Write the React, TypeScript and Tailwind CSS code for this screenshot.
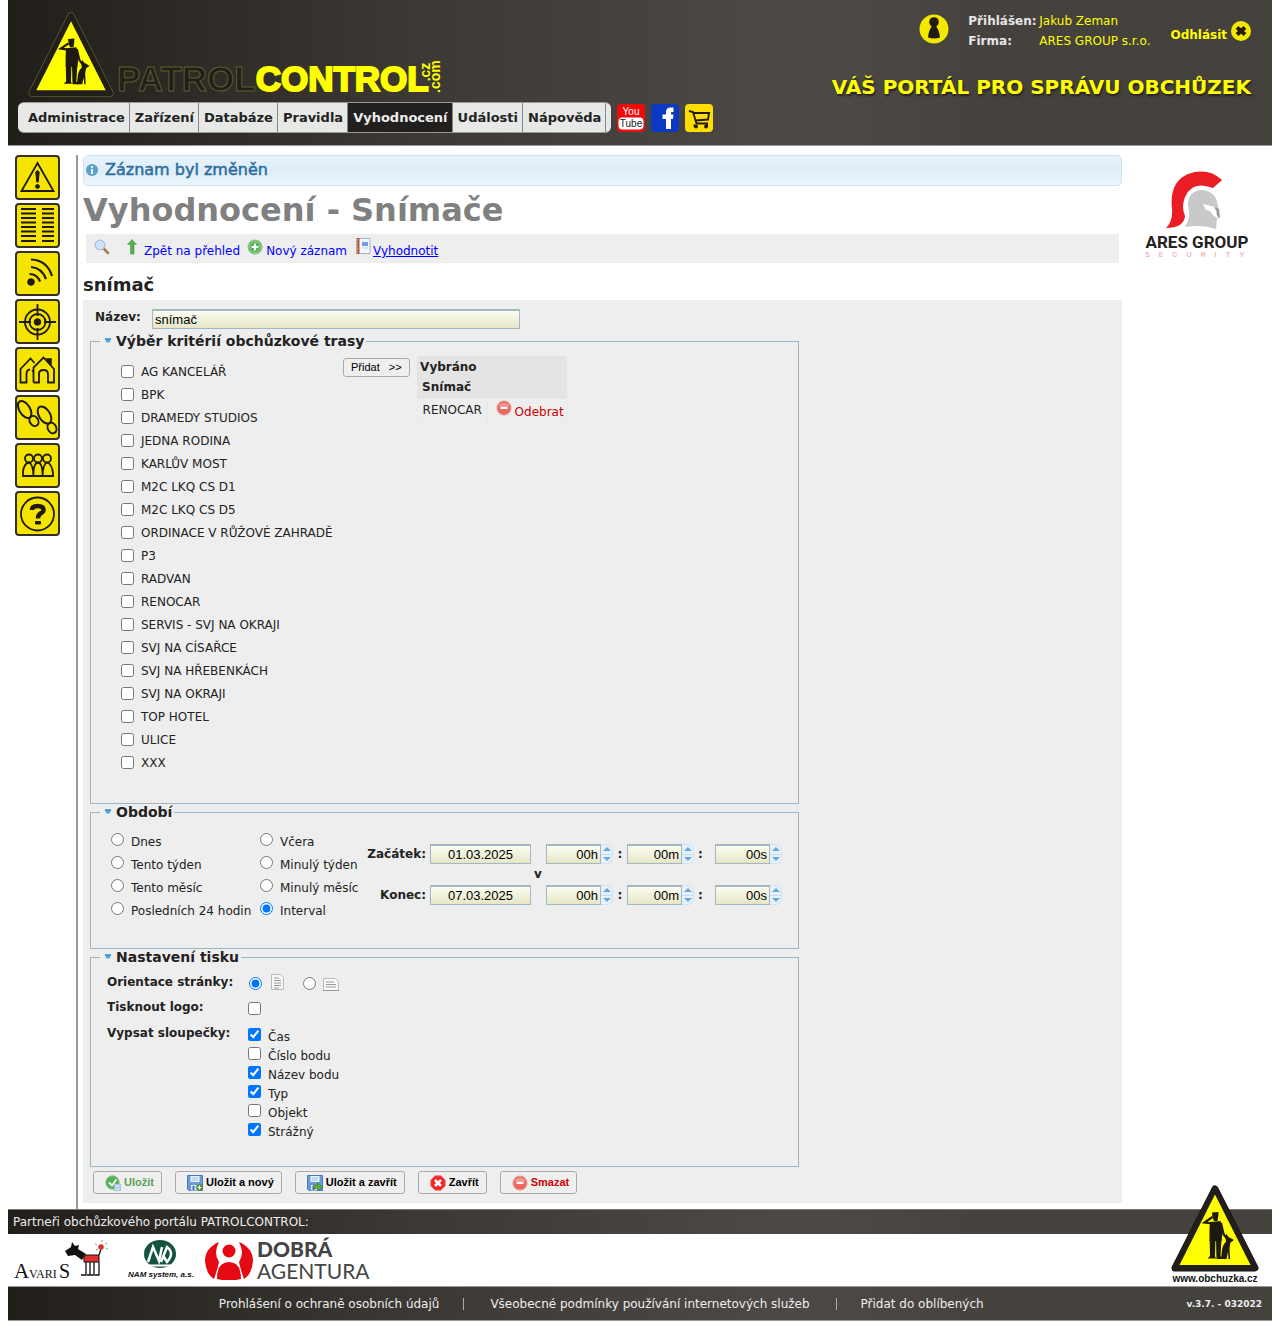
import React from 'react'

const bar =
  'bg-[linear-gradient(90deg,#221e1a_0%,#3c3834_32%,#4c4845_60%,#4c4845_66%,#45413d_78%,#45413d_100%)]'
const sans = "font-['Liberation_Sans',Arial,sans-serif]"
const field =
  'h-5 border border-[#a3b8c4] border-t-2 bg-linear-to-b from-[#fbfdf0] to-[#e6e6c6] text-[13px] text-black outline-none ' + sans
const btn =
  'flex items-center rounded-[3px] border border-[#aaa] bg-[#efefef] text-[11px] text-black ' + sans
const action = 'h-[23px] gap-[3px] pr-[7px] pl-[11px] font-bold ' + btn

function Guard() {
  return (
    <g fill="#1e1a12">
      <path d="M41 27.500L47.500 27 47.300 31 46.500 36H43L41.500 32z" />
      <path d="M39 37L49.500 36 52 44 50.500 56H38.500V44z" />
      <path d="M41 38.500L33.500 37.500 41.500 32M50 38L52.500 49 57 55" fill="none" stroke="#1e1a12" strokeWidth="2.200" />
      <path d="M38.700 54H44.500L44 71 45 73.500H36.500L39 71zM45 54H50.500L49.500 71 52 74H45.500z" />
      <path d="M50 74L51 65Q52 59 55 57L54.500 52 55.500 49 57.500 52 63 55 59.500 57.500 58.500 63 59 74H57.500L57 67 55.500 74z" />
    </g>
  )
}

function Sign({ edge, className }: { edge: string; className: string }) {
  return (
    <svg viewBox="0 0 88 88" className={className} aria-hidden="true">
      <path d="M44 4L84 83H4z" fill={edge} stroke={edge} strokeWidth="7" strokeLinejoin="round" />
      <path d="M44 4L84 83H4z" fill="#221f1a" stroke="#221f1a" strokeWidth="6" strokeLinejoin="round" />
      <path d="M44 9.500L79.500 80H8.500z" fill="#ff0" />
      <Guard />
    </svg>
  )
}

const sideIcons: { label: string; art: React.ReactNode }[] = [
  {
    label: 'Upozornění',
    art: (
      <>
        <path d="M22.500 8L38.500 36H6.500z" fill="none" strokeWidth="1.800" />
        <path d="M20.800 17q1.700-3 3.400 0L23.200 27h-1.400z" fill="#1e1a12" strokeWidth="1" />
        <circle cx="22.500" cy="31.500" r="1.900" fill="#1e1a12" strokeWidth="1" />
      </>
    ),
  },
  {
    label: 'Seznam',
    art: (
      <path
        d="M6 6H21M6 10.500H21M6 15H21M6 19.500H21M6 24H21M6 28.500H21M6 33H21M6 38H21M27 6H39M27 10.500H39M27 15H39M27 19.500H39M27 24H39M27 28.500H39M27 33H39M27 38H39"
        strokeWidth="2"
      />
    ),
  },
  {
    label: 'Snímače',
    art: (
      <>
        <circle cx="16" cy="31" r="3.300" fill="#1e1a12" strokeWidth="1" />
        <path d="M16 8.500Q32 9 37 25M16 16Q27 17 31 28M14.500 23Q22 23 25 30.500" fill="none" strokeWidth="2.200" />
      </>
    ),
  },
  {
    label: 'Body',
    art: (
      <>
        <circle cx="22.500" cy="23" r="12.500" fill="none" strokeWidth="1.800" />
        <circle cx="22.500" cy="23" r="8" fill="none" strokeWidth="1.800" />
        <circle cx="22.500" cy="23" r="3.300" fill="#1e1a12" />
        <path d="M22.500 5V17M22.500 29V41M4 23H16M29 23H41" fill="none" strokeWidth="1.800" />
      </>
    ),
  },
  {
    label: 'Objekty',
    art: (
      <>
        <path
          d="M19.500 16L15.500 11.500 5.500 22V35.500H11.500V27Q11.500 23 15 22.500M18.500 35.500V23.500L17 24.500M18.500 35.500H24V27Q24 23 28.500 23T33 27V35.500H39V22L28.500 10.500 18.500 20.500V24"
          fill="none"
          strokeWidth="1.800"
        />
        <path d="M32 12H36V18z" fill="#1e1a12" strokeWidth="1.500" />
      </>
    ),
  },
  {
    label: 'Trasy',
    art: (
      <g fill="none" strokeWidth="2">
        <ellipse cx="9.700" cy="14.500" rx="5.300" ry="9.500" transform="rotate(-32 9.700 14.500)" />
        <ellipse cx="19" cy="26" rx="4.200" ry="5.300" transform="rotate(-32 19 26)" />
        <ellipse cx="29.500" cy="20" rx="5.500" ry="9.500" transform="rotate(-32 29.500 20)" />
        <ellipse cx="37" cy="33" rx="4.200" ry="5.500" transform="rotate(-26 37 33)" />
      </g>
    ),
  },
  {
    label: 'Uživatelé',
    art: (
      <g fill="none" strokeWidth="1.800">
        <circle cx="14" cy="15.500" r="4" />
        <circle cx="23" cy="15.500" r="4" />
        <circle cx="32" cy="15.500" r="4" />
        <path d="M8 33V29Q9 20 14 19.500 18 21 18.500 33ZM18.500 33V29Q19 20 23 19.500 27 20 27.500 29V33ZM27.500 33Q28 21 32 19.500 37 21 38 30V33Z" />
      </g>
    ),
  },
  {
    label: 'Nápověda',
    art: (
      <>
        <circle cx="22.500" cy="23" r="16.500" fill="none" strokeWidth="1.800" />
        <path d="M17 19Q17 15 22.500 15 28.500 15 28.500 19 28.500 21 25.500 22.500 23 24 23 27.500" fill="none" strokeWidth="4.500" />
        <path d="M20.500 30.500h5v2.500h-5z" fill="#1e1a12" strokeWidth="1" />
      </>
    ),
  },
]

const menu = ['Administrace', 'Zařízení', 'Databáze', 'Pravidla', 'Vyhodnocení', 'Události', 'Nápověda']

const criteria = [
  'AG KANCELÁŘ', 'BPK', 'DRAMEDY STUDIOS', 'JEDNA RODINA', 'KARLŮV MOST', 'M2C LKQ CS D1',
  'M2C LKQ CS D5', 'ORDINACE V RŮŽOVÉ ZAHRADĚ', 'P3', 'RADVAN', 'RENOCAR', 'SERVIS - SVJ NA OKRAJI',
  'SVJ NA CÍSAŘCE', 'SVJ NA HŘEBENKÁCH', 'SVJ NA OKRAJI', 'TOP HOTEL', 'ULICE', 'XXX',
]

const periods = [
  ['Dnes', 'Včera'],
  ['Tento týden', 'Minulý týden'],
  ['Tento měsíc', 'Minulý měsíc'],
  ['Posledních 24 hodin', 'Interval'],
]

const columns: [string, boolean][] = [
  ['Čas', true],
  ['Číslo bodu', false],
  ['Název bodu', true],
  ['Typ', true],
  ['Objekt', false],
  ['Strážný', true],
]

function Minus() {
  return (
    <svg viewBox="0 0 16 16" className="size-4 shrink-0" aria-hidden="true">
      <circle cx="8" cy="8" r="7" fill="#ea6a62" stroke="#e9938d" />
      <path d="M2.500 6a6 5 0 0 1 11 0q-5 3-11 0z" fill="#f29a94" />
      <path d="M4.500 8H11.500" stroke="#fff" strokeWidth="2" />
    </svg>
  )
}

function Floppy({ badge }: { badge: 'plus' | 'arrow' }) {
  return (
    <svg viewBox="0 0 16 16" className="size-4 shrink-0" aria-hidden="true">
      <path d="M.5.500h15v15H2L.500 14z" fill="#6b9bdc" stroke="#4a78bb" />
      <path d="M3.500 1h9v6h-9z" fill="#e8f1fb" />
      <path d="M5 3h6M5 5h6" stroke="#9dbde4" />
      <path d="M4 10h8v5.500H4z" fill="#dbe6f3" />
      <path d="M5.500 11h2v4h-2z" fill="#3f6fb5" />
      {badge === 'plus' ? (
        <>
          <circle cx="12.500" cy="12.500" r="3.200" fill="#5d9645" stroke="#4a7d3b" strokeWidth=".6" />
          <path d="M12.500 10.500v4M10.500 12.500h4" stroke="#fff" strokeWidth="1.200" />
        </>
      ) : (
        <path d="M6.500 10h4V7.500l5.300 4.700-5.300 3.800v-2.500h-4z" fill="#5da645" stroke="#3c7d2b" strokeWidth=".7" />
      )}
    </svg>
  )
}

function Section({ title, className, children }: { title: string; className: string; children: React.ReactNode }) {
  return (
    <fieldset className="w-[709px] border border-[#9db4c3]">
      <legend className="ml-[9px] flex items-center pr-[2px] text-sm leading-4 font-bold">
        <svg viewBox="0 0 16 16" className="size-4" aria-hidden="true">
          <path d="M4.500 5.500h7L9.500 9.500h-3z" fill="#58a9e0" />
          <path d="M5 6h6" stroke="#2f7fbd" />
        </svg>
        {title}
      </legend>
      <div className={className}>{children}</div>
    </fieldset>
  )
}

function TimeBox({ value, label }: { value: string; label: string }) {
  return (
    <span className="flex">
      <input aria-label={label} defaultValue={value} className={'w-[55px] pr-[2px] text-right ' + field} />
      <span className="flex h-5 w-3 flex-col rounded-r-md border border-l-0 border-[#cfe2f1] bg-[#e6f2fb]">
        <button type="button" aria-label={label + ' – více'} className="flex flex-1 items-center justify-center border-b border-[#c5dbec]">
          <svg viewBox="0 0 8 4" className="h-1 w-2"><path d="M0 4L4 0 8 4z" fill="#6da8d5" /></svg>
        </button>
        <button type="button" aria-label={label + ' – méně'} className="flex flex-1 items-center justify-center">
          <svg viewBox="0 0 8 4" className="h-1 w-2"><path d="M0 0L4 4 8 0z" fill="#6da8d5" /></svg>
        </button>
      </span>
    </span>
  )
}

function DateRow({ name, date }: { name: string; date: string }) {
  return (
    <div className="flex items-center">
      <label htmlFor={name} className="w-[59px] text-right font-bold">{name}:</label>
      <input id={name} defaultValue={date} className={'ml-1 w-[101px] text-center ' + field} />
      <span className="ml-[15px]"><TimeBox value="00h" label={name + ' hodiny'} /></span>
      <b className="w-[14px] text-center">:</b>
      <TimeBox value="00m" label={name + ' minuty'} />
      <b className="w-[21px] pl-1">:</b>
      <TimeBox value="00s" label={name + ' sekundy'} />
    </div>
  )
}

export default function App() {
  return (
    <div className="bg-white px-2 pb-2 font-['DejaVu_Sans',Verdana,sans-serif] text-xs text-[#222]">
      <header className={'flex justify-between border-b border-[#999] pb-3 ' + bar}>
        <div className="pl-[10px] pt-2">
          <a href="#domu" aria-label="PatrolControl" className="flex h-[94px] items-end">
            <Sign edge="#77753a" className="ml-[10px] size-[86px] shrink-0 self-center" />
            <span className="ml-[3px] flex items-start font-['Liberation_Sans',Arial,sans-serif] text-[35px] leading-[46px] font-bold">
              <span className="text-[#221f1a] [-webkit-text-stroke:1px_#5d5b30]">PATROL</span>
              <span className="text-[#ff0] [-webkit-text-stroke:2px_#ff0]">CONTROL</span>
              <span className="-ml-[9px] h-[37px] rotate-180 text-sm leading-[10px] text-[#ff0] [writing-mode:vertical-rl]">
                &nbsp;&nbsp;&nbsp;.cz<br />.com
              </span>
            </span>
          </a>
          <nav className="flex items-center">
            <ul className="flex overflow-hidden rounded-md border-y border-[#999] bg-[#e6e9e6] pr-[5px] text-[13px] leading-[29px] font-bold">
              {menu.map((m, i) => (
                <li
                  key={m}
                  className={
                    'border-r border-[#888] pr-1 ' +
                    (i === 0 ? 'pl-[10px] ' : 'pl-[5px] ') +
                    (m === 'Vyhodnocení' ? 'bg-[#22201e] text-[#eee]' : 'text-[#222]')
                  }
                >
                  <a href={'#' + m}>{m}</a>
                </li>
              ))}
            </ul>
            <a href="#youtube" aria-label="YouTube" className="ml-[6px]">
              <svg viewBox="0 0 28 28" className="size-7">
                <rect width="28" height="28" rx="4" fill="#f00b0b" />
                <rect x="1.500" y="13.500" width="25" height="12" rx="4" fill="#fff" />
                <g className="font-['Liberation_Sans',sans-serif]" textAnchor="middle">
                  <text x="14" y="11" fontSize="10" fill="#fff">You</text>
                  <text x="14" y="23" fontSize="10" fill="#222">Tube</text>
                </g>
              </svg>
            </a>
            <a href="#facebook" aria-label="Facebook" className="ml-[6px]">
              <svg viewBox="0 0 28 28" className="size-7">
                <rect width="28" height="28" rx="4" fill="#0b39c2" />
                <path d="M15 25V15H11.500V10.500H15V8Q15 3.500 19.500 3.500H22.500V8H21Q20 8 20 9V10.500H22.500L22 15H20V25z" fill="#fff" />
              </svg>
            </a>
            <a href="#obchod" aria-label="Obchod" className="ml-[6px]">
              <svg viewBox="0 0 28 28" className="size-7">
                <rect width="28" height="28" rx="4" fill="#fd0" />
                <path d="M4 7L8 8 11.500 19.500H23M8.500 9H24L23 15.500 10.500 16.500M9.500 20.500V23M22 20.500V23" fill="none" stroke="#221c00" strokeWidth="1.900" />
                <circle cx="11" cy="22.500" r="1.900" fill="#221c00" />
                <circle cx="21" cy="22.500" r="1.900" fill="#221c00" />
              </svg>
            </a>
          </nav>
        </div>
        <div className="flex flex-col items-end pt-[11px] pr-[21px]">
          <div className="flex items-start text-[#ff0]">
            <svg viewBox="0 0 30 30" className="mt-[3px] size-[30px]" aria-hidden="true">
              <circle cx="15" cy="15" r="14.500" fill="#f5e800" />
              <circle cx="15" cy="8" r="4.800" fill="#221c10" />
              <path d="M13 12h4q3.500 5 4 11.500-6 2-12 0 .5-7 4-11.500z" fill="#221c10" />
            </svg>
            <dl className="ml-[19px] grid grid-cols-[71px_auto] leading-5">
              <dt className="font-bold text-[#e6e6e6]">Přihlášen:</dt>
              <dd>Jakub Zeman</dd>
              <dt className="font-bold text-[#e6e6e6]">Firma:</dt>
              <dd>ARES GROUP s.r.o.</dd>
            </dl>
            <a href="#odhlasit" className="ml-5 flex items-center gap-1 pt-2 font-bold">
              <span className="pt-2">Odhlásit</span>
              <svg viewBox="0 0 20 20" className="size-5" aria-hidden="true">
                <circle cx="10" cy="10" r="10" fill="#f5e800" />
                <path d="M6 6.500L14 13.500M14 6.500L6 13.500" stroke="#221c10" strokeWidth="4" />
              </svg>
            </a>
          </div>
          <p className="mt-5 text-xl leading-8 font-bold text-[#ff0] [text-shadow:1px_2px_2px_#222]">VÁŠ PORTÁL PRO SPRÁVU OBCHŮZEK</p>
        </div>
      </header>

      <div className="flex pt-[9px]">
        <aside className="flex w-[70px] shrink-0 flex-col gap-[3px] border-r-2 border-[#999] pl-[7px]">
          {sideIcons.map((s) => (
            <a key={s.label} href={'#' + s.label} aria-label={s.label} className="size-[45px]">
              <svg viewBox="0 0 45 45" className="size-full" stroke="#1e1a12">
                <rect x="1" y="1" width="43" height="43" rx="3" fill="#f5e400" stroke="#33302a" strokeWidth="2" />
                {s.art}
              </svg>
            </a>
          ))}
        </aside>

        <main className="ml-[5px] min-w-0 flex-1 pb-[6px]">
          <div role="status" className="flex h-[31px] items-center rounded-[5px] border border-[#cfe2f2] bg-linear-to-b from-[#e8f4fd] via-[#deedf8] to-[#edf6fd] pb-[2px] text-base text-[#2e6e9e]">
            <svg viewBox="0 0 12 12" className="mx-[2px] size-3" aria-hidden="true">
              <circle cx="6" cy="6" r="6" fill="#5a9fcf" />
              <path d="M6 2v1.800M6 5v5" stroke="#fff" strokeWidth="2" />
            </svg>
            <span className="ml-[5px] [-webkit-text-stroke:0.5px_#2e6e9e]">Záznam byl změněn</span>
          </div>
          <h1 className="mt-1 text-[32px] leading-[40px] font-bold text-[#808080]">Vyhodnocení - Snímače</h1>
          <div className="mt-1 mr-[3px] ml-[3px] flex h-[29px] items-start bg-[#eee] text-[#00f]">
            <button type="button" aria-label="Hledat" className="ml-2 mt-[5px]">
              <svg viewBox="0 0 16 16" className="size-4">
                <path d="M9.500 9.500L14 14" stroke="#a87c4c" strokeWidth="2.500" strokeLinecap="round" />
                <circle cx="6" cy="6" r="4.800" fill="#cfe2f8" stroke="#a9bfdc" strokeWidth="1.300" />
              </svg>
            </button>
            <a href="#prehled" className="ml-[14px] flex">
              <svg viewBox="0 0 16 16" className="mt-[5px] size-4" aria-hidden="true">
                <path d="M8 .500L12.500 5.500H10V15H6.500V5.500H3.500z" fill="#58ad54" stroke="#479544" strokeWidth=".6" />
              </svg>
              <span className="ml-1 mt-[9px]">Zpět na přehled</span>
            </a>
            <a href="#novy" className="ml-[7px] flex">
              <svg viewBox="0 0 16 16" className="mt-[5px] size-4" aria-hidden="true">
                <circle cx="8" cy="8" r="7" fill="#5cb258" stroke="#8cc489" />
                <circle cx="8" cy="8" r="5.500" fill="none" stroke="#a5dba0" strokeWidth=".8" />
                <path d="M8 4.500v7M4.500 8h7" stroke="#fff" strokeWidth="2" />
              </svg>
              <span className="ml-[3px] mt-[9px]">Nový záznam</span>
            </a>
            <a href="#vyhodnotit" className="ml-2 flex underline">
              <svg viewBox="0 0 16 16" className="mt-1 size-4" aria-hidden="true">
                <path d="M3 .500h12v15H3z" fill="#f4f8fd" stroke="#a4b3c6" />
                <path d="M1.500 0h3v16h-3z" fill="#a85c3a" />
                <path d="M2 2h1M2 5h1M2 8h1M2 11h1M2 14h1" stroke="#e8cdb8" />
                <path d="M7 4h6v4H7z" fill="#6e9fe0" />
                <path d="M7 10h6" stroke="#b9cdea" />
              </svg>
              <span className="ml-[2px] mt-[9px]">Vyhodnotit</span>
            </a>
          </div>
          <h2 className="mt-2 text-lg leading-7 font-bold">snímač</h2>
          <form className="mt-[1px] bg-[#eee] pl-[7px]" onSubmit={(e) => e.preventDefault()}>
            <div className="flex pt-[9px] pl-[5px]">
              <label htmlFor="nazev" className="w-[57px] font-bold">Název:</label>
              <input id="nazev" defaultValue="snímač" className={'w-[368px] px-[2px] ' + field} />
            </div>
            <div className="mt-1">
              <Section title="Výběr kritérií obchůzkové trasy" className="flex items-start pt-[11px] pb-[29px] pl-[30px]">
                <ul className="w-[222px]">
                  {criteria.map((c) => (
                    <li key={c}>
                      <label className="flex h-[23px] items-center gap-[7px] whitespace-nowrap">
                        <input type="checkbox" className="size-[13px] shrink-0" />
                        {c}
                      </label>
                    </li>
                  ))}
                </ul>
                <button type="button" className={'-mt-[2px] h-[19px] gap-[9px] px-[7px] ' + btn}>
                  <span>Přidat</span>
                  <span>&gt;&gt;</span>
                </button>
                <table className="-mt-1 ml-[7px] w-[151px] text-left">
                  <thead className="bg-[#e4e4e4]">
                    <tr><th colSpan={2} className="h-[21px] px-[3px]">Vybráno</th></tr>
                    <tr><th className="h-[21px] px-[5px]">Snímač</th><th></th></tr>
                  </thead>
                  <tbody>
                    <tr className="border border-[#eaeaea]">
                      <td className="h-[23px] w-[70px] border-r border-[#e8e8e8] pl-[5px]">RENOCAR</td>
                      <td className="pl-2">
                        <button type="button" className="flex gap-[3px] text-[#c00]">
                          <Minus />
                          <span className="pt-1">Odebrat</span>
                        </button>
                      </td>
                    </tr>
                  </tbody>
                </table>
              </Section>
            </div>
            <Section title="Období" className="flex pb-[26px] pl-5">
              <div className="grid grid-cols-[149px_107px] pt-[10px]">
                {periods.flat().map((p) => (
                  <label key={p} className="flex h-[23px] gap-[7px] whitespace-nowrap">
                    <input type="radio" name="obdobi" defaultChecked={p === 'Interval'} className="mt-[3px] size-[13px] shrink-0" />
                    <span className="pt-1">{p}</span>
                  </label>
                ))}
              </div>
              <div className="pt-[24px]">
                <DateRow name="Začátek" date="01.03.2025" />
                <p className="pl-[167px] leading-[21px] font-bold">v</p>
                <DateRow name="Konec" date="07.03.2025" />
              </div>
            </Section>
            <Section title="Nastavení tisku" className="grid grid-cols-[141px_auto] pt-[7px] pb-6 pl-4">
              <b className="pt-[2px]">Orientace stránky:</b>
              <div className="flex h-[26px] items-start">
                <input type="radio" name="orientace" aria-label="Na výšku" defaultChecked className="mt-[5px] ml-[1px] size-[13px]" />
                <svg viewBox="0 0 16 18" className="ml-[7px] mt-[1px] h-[18px] w-4" aria-hidden="true">
                  <path d="M2.500 1.500h9l3 3v12h-12z" fill="#f8f8f8" stroke="#bbb" />
                  <path d="M5 5h5M5 7.500h7M5 10h7M5 12.500h7M5 15h5" stroke="#999" />
                </svg>
                <input type="radio" name="orientace" aria-label="Na šířku" className="mt-[5px] ml-[18px] size-[13px]" />
                <svg viewBox="0 0 18 16" className="ml-[6px] mt-[4px] h-4 w-[18px]" aria-hidden="true">
                  <path d="M1.500 2.500h12l3 3v9h-15z" fill="#f8f8f8" stroke="#bbb" />
                  <path d="M4 6h8M4 8.500h10M4 11h10M1 14.500h16" stroke="#999" />
                </svg>
              </div>
              <label htmlFor="logo" className="pt-[1px] font-bold">Tisknout logo:</label>
              <div className="h-[26px]"><input id="logo" type="checkbox" className="mt-1 size-[13px]" /></div>
              <b className="pt-[1px]">Vypsat sloupečky:</b>
              <div className="pt-1">
                {columns.map(([c, on]) => (
                  <label key={c} className="flex h-[19px] gap-[7px]">
                    <input type="checkbox" defaultChecked={on} className="size-[13px]" />
                    <span className="pt-[1px]">{c}</span>
                  </label>
                ))}
              </div>
            </Section>
            <div className="flex gap-[13px] pt-1 pb-[9px] pl-[3px]">
              <button type="button" className={action}>
                <svg viewBox="0 0 16 16" className="size-4" aria-hidden="true">
                  <circle cx="7.500" cy="7.500" r="6.800" fill="#54b054" stroke="#8fc98f" />
                  <path d="M4 7.500L7 10.500 11.500 4.500" fill="none" stroke="#fff" strokeWidth="1.800" />
                  <path d="M9 9h7v7H9z" fill="#a9c5e6" />
                  <path d="M10.500 11h4M10.500 14h4" stroke="#fff" />
                </svg>
                <span className="text-[#5a9f5a]">Uložit</span>
              </button>
              <button type="button" className={action}>
                <Floppy badge="plus" />Uložit a nový
              </button>
              <button type="button" className={action}>
                <Floppy badge="arrow" />Uložit a zavřít
              </button>
              <button type="button" className={action}>
                <svg viewBox="0 0 16 16" className="size-4" aria-hidden="true">
                  <path d="M5 .800h6L15.200 5v6L11 15.200H5L.800 11V5z" fill="#ee2626" stroke="#f66" strokeWidth=".8" />
                  <path d="M5 5L11 11M11 5L5 11" stroke="#fff" strokeWidth="2.600" />
                </svg>
                Zavřít
              </button>
              <button type="button" className={action}>
                <Minus />
                <span className="text-[#c00]">Smazat</span>
              </button>
            </div>
          </form>
        </main>

        <aside className="flex w-[150px] shrink-0 flex-col items-center pt-[15px]">
          <svg viewBox="0 0 120 90" className="h-[90px] w-[120px]" role="img" aria-label="ARES GROUP SECURITY">
            <path d="M29 58Q36 51 35 39 32 12 51 4 71-3 85 10L76 18Q55 10 48 27 44 37 48 46 47 58 29 58z" fill="#ea1c24" />
            <path d="M48 57Q54 48 51 35 51 21 65 20 79 21 81 36L83 48 80 49 79 59Q65 54 48 57z" fill="#c8c9cb" />
            <path d="M66 34L78 37 79 42 81 49 76 45 73 41 69 40z" fill="#fff" />
            <path d="M77 37L82 39 83 48 80 45 80 41z" fill="#999" />
            <g className="font-['Roboto','Liberation_Sans',sans-serif]">
              <text x="60" y="78" textAnchor="middle" fontSize="17" fontWeight="700" fill="#222">ARES GROUP</text>
              <text x="8" y="87" fontSize="8" fill="#f0a0a0" letterSpacing="9">SECURITY</text>
            </g>
          </svg>
        </aside>
      </div>

      <footer className="relative">
        <p className={'border-t border-[#777] pl-[5px] leading-6 text-[#eee] ' + bar}>Partneři obchůzkového portálu PATROLCONTROL:</p>
        <div className="flex h-[52px] items-center">
          <a href="#avaris" aria-label="Avaris" className="ml-[6px]">
            <svg viewBox="0 0 100 42" className="h-[42px] w-[100px]">
              <g className="font-['Liberation_Serif',serif]" fill="#111">
                <text x="0" y="39" fontSize="21">A</text>
                <text x="15" y="39" fontSize="12">VARI</text>
                <text x="45" y="39" fontSize="20">S</text>
              </g>
              <path d="M51 12L57 8 58 3 61 7 65 6 64 10 72 15 68 21 61 16 54 17z" fill="#111" />
              <path d="M70 16h15v7H70z" fill="#e03030" stroke="#111" />
              <path d="M72 23v13h-5M76 23v13h-3M80 23v13h-4M85 23v13h-4M67 18l3-1M85 16l2-6" fill="none" stroke="#111" strokeWidth="1.300" />
              <circle cx="87" cy="8" r="2.800" fill="#e03030" />
              <path d="M81 5l2 1M88 1v2M93 4l-2 1M94 10l-2-1M82 11l2-1" stroke="#999" />
            </svg>
          </a>
          <a href="#nam" aria-label="NAM system, a.s." className="ml-3">
            <svg viewBox="0 0 70 42" className="h-[42px] w-[70px]">
              <ellipse cx="34" cy="15" rx="16" ry="14" fill="#14543f" />
              <path d="M22 23L27 8 33 22 36 8M35 23L41 8Q49 14 41 23L38 18" fill="none" stroke="#fff" strokeWidth="2.500" />
              <path d="M18 26.500H51" stroke="#fff" strokeWidth="2" />
              <text x="35" y="38" textAnchor="middle" fontSize="8" fontWeight="700" fontStyle="italic" fill="#111" className="font-['Liberation_Sans',sans-serif]">NAM system, a.s.</text>
            </svg>
          </a>
          <a href="#dobra" className="ml-[9px] flex items-center gap-1 font-['Lato',sans-serif] text-[#444]">
            <svg viewBox="0 0 48 40" className="h-[40px] w-12" aria-hidden="true">
              <path d="M14 2Q0 8 0 21 1 34 9 39 12 31 14 22 8 13 14 2zM34 2Q48 8 48 21 47 34 39 39 36 31 34 22 40 13 34 2z" fill="#e50914" />
              <circle cx="24" cy="11" r="6.500" fill="#e50914" />
              <path d="M12 39Q12 22 24 22T36 39Q24 42 12 39z" fill="#e50914" />
            </svg>
            <span className="text-[21px] leading-[22px]">
              <b className="font-black">DOBRÁ</b>
              <br />
              AGENTURA
            </span>
          </a>
        </div>
        <div className={'flex h-[35px] items-center border-y border-[#999] text-[#eee] ' + bar}>
          <nav className="flex flex-1 items-center justify-center pl-2">
            <a href="#soukromi">Prohlášení o ochraně osobních údajů</a>
            <span className="mx-6 h-3 w-px bg-[#aaa]" />
            <a href="#podminky" className="mx-[2px]">Všeobecné podmínky používání internetových služeb</a>
            <span className="mx-6 h-3 w-px bg-[#aaa]" />
            <a href="#oblibene">Přidat do oblíbených</a>
          </nav>
          <span className="pr-[10px] text-[9px] font-bold">v.3.7. - 032022</span>
        </div>
        <a href="#obchuzka" className="absolute right-[13px] bottom-[36px] flex flex-col items-center">
          <Sign edge="#111" className="size-[88px]" />
          <span className="font-['Liberation_Sans',sans-serif] text-[10px] leading-3 font-bold text-[#111]">www.obchuzka.cz</span>
        </a>
      </footer>
    </div>
  )
}
